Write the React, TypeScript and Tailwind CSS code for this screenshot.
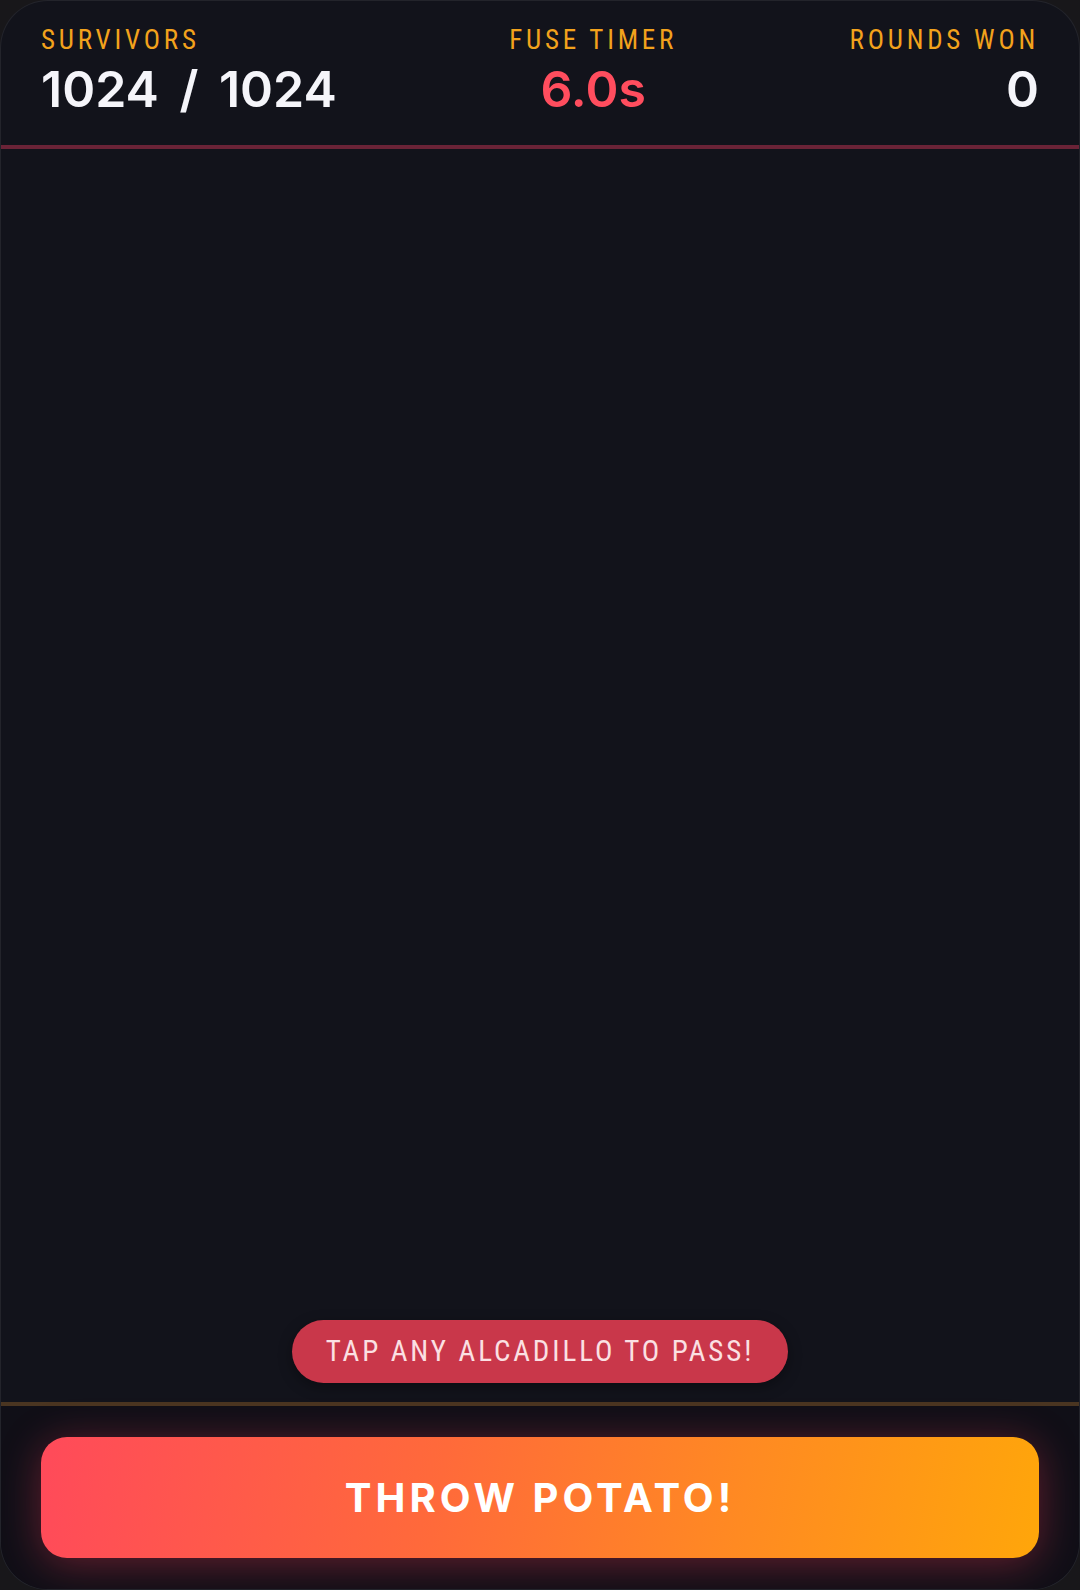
import React from "react";

const narrow = { fontFamily: '"Liberation Sans Narrow", "Roboto Condensed", Roboto, sans-serif' };
const inter = { fontFamily: 'Inter, "Liberation Sans", sans-serif' };

function Stat({
  label,
  value,
  align,
  valueClass,
}: {
  label: string;
  value: string;
  align: "left" | "center" | "right";
  valueClass: string;
}) {
  const alignClass = align === "left" ? "items-start" : align === "center" ? "items-center" : "items-end";
  return (
    <div className={`flex flex-col ${alignClass}`}>
      <div className="text-[27px] leading-[30px] tracking-[0.14em] text-[#f2a21c]" style={narrow}>
        {label}
      </div>
      <div
        className={`mt-[8px] text-[50px] leading-[52px] font-semibold [word-spacing:8px] ${valueClass}`}
        style={inter}
      >
        {value}
      </div>
    </div>
  );
}

export default function App() {
  return (
    <div className="h-screen w-full bg-[#18171a]">
      <div className="flex h-full flex-col overflow-hidden rounded-[48px] border border-white/[0.07] bg-[#12131b]">
        <header className="flex items-start justify-between border-b-[4px] border-[#6a2337] px-10 pt-[24px] pb-[30px]">
          <Stat label="SURVIVORS" value="1024 / 1024" align="left" valueClass="text-[#f5f5fa]" />
          <Stat label="FUSE TIMER" value="6.0s" align="center" valueClass="text-[#ff4d5e]" />
          <Stat label="ROUNDS WON" value="0" align="right" valueClass="text-[#f5f5fa]" />
        </header>

        <main className="flex flex-1 flex-col items-center justify-end pb-[19px]">
          <div
            className="flex h-[63px] items-center rounded-full bg-[#c9374a] px-[34px] text-[29px] tracking-[0.1em] text-[#fbe0e3] shadow-[0_4px_14px_rgba(0,0,0,0.35)]"
            style={narrow}
          >
            TAP ANY ALCADILLO TO PASS!
          </div>
        </main>

        <footer className="border-t-[4px] border-[#4a3521] bg-[#100f17] px-10 pt-[31px] pb-[31px]">
          <button
            className="flex h-[121px] w-full items-center justify-center rounded-[26px] bg-[linear-gradient(100deg,#ff4a5a_0%,#ff6a3a_40%,#ff8a22_70%,#ffa60a_100%)] text-[40px] font-bold tracking-[0.1em] text-white shadow-[0_6px_40px_rgba(255,60,90,0.35)]"
            style={inter}
          >
            THROW POTATO!
          </button>
        </footer>
      </div>
    </div>
  );
}
